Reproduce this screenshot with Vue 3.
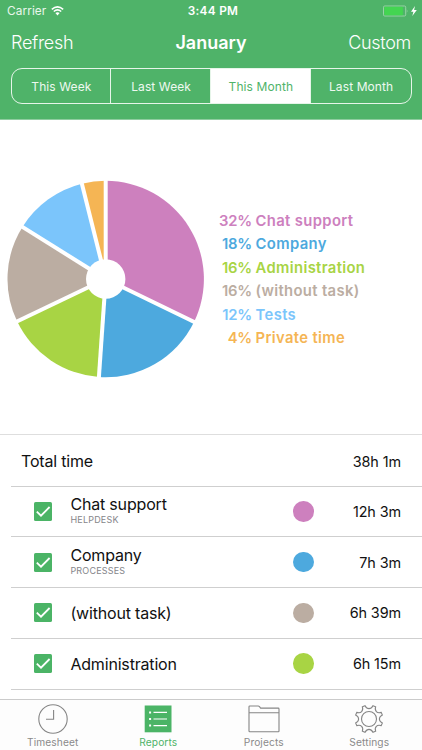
<template>
  <div class="screen">
    <header class="header">
      <div class="status-bar">
        <span class="carrier">
          Carrier
          <svg class="wifi" viewBox="0 0 13 10" width="13" height="10">
            <path d="M0.8 3.4 Q6.5 -1.6 12.2 3.4" />
            <path d="M2.8 5.5 Q6.5 2.3 10.2 5.5" />
            <path class="wifi-dot" d="M6.5 9.4 L4.4 7.1 Q6.5 5.4 8.6 7.1 Z" />
          </svg>
        </span>
        <span class="clock">3:44 PM</span>
        <span class="battery-wrap">
          <svg viewBox="0 0 36 12" width="36" height="12">
            <rect class="battery-case" x="0.5" y="1" width="22.2" height="10" rx="1.2" />
            <rect class="battery-level" x="1.3" y="1.8" width="18.6" height="8.4" rx="0.6" />
            <path class="battery-tip" d="M23.8 4.2 Q25.2 6 23.8 7.8 Z" />
            <path class="bolt" d="M32 1 L28 6.7 H30.4 L29.3 11 L33.8 5.1 H31.1 Z" />
          </svg>
        </span>
      </div>

      <div class="nav-bar">
        <span class="nav-action">Refresh</span>
        <h1>January</h1>
        <span class="nav-action right">Custom</span>
      </div>

      <div class="segments">
        <button
          v-for="range in ranges"
          :key="range"
          class="segment"
          :class="{ active: range === selectedRange }"
          @click="selectedRange = range"
        >
          {{ range }}
        </button>
      </div>
    </header>

    <section class="chart">
      <svg class="pie" viewBox="-98.7 -99 198 198" width="198" height="198">
        <path v-for="slice in slices" :key="slice.name" :d="slice.path" :fill="slice.color" />
        <line
          v-for="slice in slices"
          :key="'line-' + slice.name"
          class="gap"
          x1="0"
          y1="0"
          :x2="slice.x"
          :y2="slice.y"
        />
        <circle class="hole" r="19.7" />
      </svg>
      <ul class="legend">
        <li v-for="slice in slices" :key="slice.name" :style="{ color: slice.color }">
          <span class="percent">{{ slice.percent }}%</span>
          <span class="legend-name">{{ slice.name }}</span>
        </li>
      </ul>
    </section>

    <section class="list">
      <div class="row total">
        <span class="row-title">Total time</span>
        <span class="row-time">38h 1m</span>
      </div>
      <div v-for="task in tasks" :key="task.name" class="row">
        <svg class="checkbox" viewBox="0 0 18 19" width="18" height="19">
          <rect width="18" height="19" rx="1.6" />
          <path d="M2.8 9.6 L7 13.7 L15.6 5" />
        </svg>
        <div class="row-text" :class="{ double: task.project }">
          <span class="row-title">{{ task.name }}</span>
          <span v-if="task.project" class="row-project">{{ task.project }}</span>
        </div>
        <span class="dot" :style="{ background: task.color }"></span>
        <span class="row-time">{{ task.time }}</span>
      </div>
    </section>

    <nav class="tab-bar">
      <a class="tab">
        <svg viewBox="0 0 32 30" width="32" height="30">
          <circle cx="16" cy="15" r="14.2" />
          <path d="M16.6 6 V15.3 H9" />
        </svg>
        <span>Timesheet</span>
      </a>
      <a class="tab active">
        <svg viewBox="0 0 32 30" width="32" height="30">
          <rect class="solid" x="2.7" y="1.5" width="26.8" height="26.8" />
          <path class="light" d="M11.5 8.4 H25 M11.5 15 H25 M11.5 21.6 H25" />
          <path class="light bullets" d="M7.1 8.4 H9.1 M7.1 15 H9.1 M7.1 21.6 H9.1" />
        </svg>
        <span>Reports</span>
      </a>
      <a class="tab">
        <svg viewBox="0 0 32 30" width="32" height="30">
          <path d="M1 27 V2.8 Q1 2 1.8 2 H10.2 Q11 2 11.5 2.7 L12.6 4.1 H30.3 Q31 4.1 31 4.9 V27 Q31 27.7 30.3 27.7 H1.8 Q1 27.7 1 27 Z M1 8.8 H31" />
        </svg>
        <span>Projects</span>
      </a>
      <a class="tab">
        <svg viewBox="-16 -15 32 30" width="32" height="30">
          <path :d="gearPath" />
          <circle r="7.5" />
        </svg>
        <span>Settings</span>
      </a>
    </nav>
  </div>
</template>

<script setup>
import { ref } from 'vue'

const ranges = ['This Week', 'Last Week', 'This Month', 'Last Month']
const selectedRange = ref('This Month')

// share is the exact portion of the circle, percent is the label
const report = [
  { name: 'Chat support', percent: 32, share: 32.2, color: '#cd80be' },
  { name: 'Company', percent: 18, share: 18.9, color: '#4da9de' },
  { name: 'Administration', percent: 16, share: 16.8, color: '#a8d444' },
  { name: '(without task)', percent: 16, share: 16, color: '#bbada2' },
  { name: 'Tests', percent: 12, share: 12.2, color: '#7bc5fb' },
  { name: 'Private time', percent: 4, share: 3.9, color: '#f5b554' }
]

const tasks = [
  { name: 'Chat support', project: 'HELPDESK', time: '12h 3m', color: '#cd80be' },
  { name: 'Company', project: 'PROCESSES', time: '7h 3m', color: '#4da9de' },
  { name: '(without task)', time: '6h 39m', color: '#bbada2' },
  { name: 'Administration', time: '6h 15m', color: '#a8d444' }
]

// Angles are clockwise from 12 o'clock
const point = (r, degrees) => {
  const rad = (degrees * Math.PI) / 180
  return [(r * Math.sin(rad)).toFixed(2), (-r * Math.cos(rad)).toFixed(2)]
}

const RADIUS = 98.2
let angle = 0
const slices = report.map((item) => {
  const [x1, y1] = point(RADIUS, angle)
  angle += item.share * 3.6
  const [x2, y2] = point(RADIUS, angle)
  const [x, y] = point(RADIUS + 2, angle)
  return { ...item, x, y, path: `M0 0 L${x1} ${y1} A${RADIUS} ${RADIUS} 0 0 1 ${x2} ${y2} Z` }
})

// Eight teeth with rounded valleys between them
const gearPath = Array.from({ length: 8 }, (_, i) => {
  const a = 22.5 + i * 45
  const start = point(13.9, a - 6)
  const end = point(13.9, a + 6)
  const c1 = point(9.6, a + 11)
  const c2 = point(9.6, a + 34)
  const next = point(13.9, a + 39)
  return `${i ? 'L' : 'M'}${start} L${end} C${c1} ${c2} ${next}`
}).join(' ') + ' Z'
</script>

<style>
body {
  margin: 0;
  background: #fff;
}
</style>

<style scoped>
.screen {
  width: 422px;
  height: 750px;
  display: flex;
  flex-direction: column;
  overflow: hidden;
  background: #fff;
  color: #111;
  font-family: Inter, 'Liberation Sans', sans-serif;
}

.header {
  box-sizing: border-box;
  height: 120px;
  flex: none;
  background: #4fb369;
  border-bottom: 1px solid #8fcca0;
  color: #fff;
}

.status-bar {
  display: grid;
  grid-template-columns: 1fr auto 1fr;
  align-items: center;
  height: 22px;
  padding: 0 3px 0 7px;
  font-size: 11.8px;
}

.carrier {
  display: flex;
  align-items: center;
  gap: 4.5px;
  letter-spacing: 0.1px;
  color: #e9f7ec;
}

.wifi {
  fill: none;
  stroke: #fff;
  stroke-width: 1.5;
}

.wifi-dot {
  fill: #fff;
  stroke: none;
}

.clock {
  font-weight: 600;
  letter-spacing: 0.3px;
}

.battery-wrap {
  display: flex;
  justify-content: flex-end;
}

.battery-case {
  fill: none;
  stroke: #a0d6ad;
  stroke-width: 0.9;
}

.battery-level {
  fill: #43d551;
}

.battery-tip {
  fill: #a0d6ad;
}

.bolt {
  fill: #fff;
}

.nav-bar {
  display: grid;
  grid-template-columns: 1fr auto 1fr;
  align-items: center;
  height: 40px;
  padding: 0 11px;
}

.nav-action {
  font-size: 18px;
  font-weight: 350;
  letter-spacing: -0.3px;
}

.right {
  text-align: right;
}

.nav-bar h1 {
  margin: 0;
  font-size: 18px;
  font-weight: 600;
}

.segments {
  box-sizing: border-box;
  display: grid;
  grid-template-columns: repeat(4, 1fr);
  height: 36px;
  margin: 6px 10.5px 0;
  border: 1.3px solid #e6f5e9;
  border-radius: 11px;
  overflow: hidden;
}

.segment {
  padding: 0 0 0 1px;
  border: 0;
  border-right: 1.3px solid #e6f5e9;
  background: none;
  color: #eef9f0;
  font-family: inherit;
  font-size: 12px;
  letter-spacing: 0.1px;
}

.segment:last-child {
  border-right: 0;
}

.segment.active {
  background: #fff;
  color: #4fb369;
}

.chart {
  display: flex;
  flex: none;
  height: 314px;
  box-sizing: border-box;
  padding: 60px 0 0 6.6px;
}

.pie {
  flex: none;
}

.gap {
  stroke: #fff;
  stroke-width: 4;
}

.hole {
  fill: #fff;
}

.legend {
  margin: 29.8px 0 0 13.4px;
  padding: 0;
  list-style: none;
  font-size: 14.8px;
  font-weight: 600;
  line-height: 23.45px;
}

.legend li {
  display: flex;
  gap: 3.6px;
}

.percent {
  width: 34px;
  letter-spacing: -0.2px;
  text-align: right;
}

.legend-name {
  letter-spacing: 0.36px;
}

.list {
  flex: none;
  border-top: 1px solid #dedede;
}

.row {
  display: flex;
  align-items: center;
  box-sizing: border-box;
  height: 50.8px;
  margin-left: 11px;
  padding: 0 21px 0 23px;
  border-bottom: 1px solid #cfcfcf;
}

.row.total {
  height: 51.5px;
  padding-top: 2px;
  padding-left: 10px;
  justify-content: space-between;
}

.checkbox {
  flex: none;
  fill: #4bb466;
}

.checkbox path {
  fill: none;
  stroke: #fff;
  stroke-width: 1.8;
}

.row-text {
  display: flex;
  flex: 1;
  flex-direction: column;
  padding: 1px 0 0 18.4px;
}

.row-text.double {
  padding: 0 0 2px 18.4px;
}

.row-title {
  font-size: 16px;
  line-height: 19px;
  letter-spacing: -0.18px;
}

.row-project {
  color: #85858a;
  font-size: 9px;
  line-height: 11px;
  letter-spacing: 0.2px;
}

.dot {
  width: 20.6px;
  height: 20.6px;
  border-radius: 50%;
}

.row-time {
  width: 87px;
  font-size: 14.4px;
  letter-spacing: -0.1px;
  text-align: right;
}

.tab-bar {
  display: grid;
  grid-template-columns: repeat(4, 1fr);
  flex: 1;
  margin-top: 9px;
  border-top: 1px solid #cbcbcb;
  background: #fdfdfd;
}

.tab {
  display: flex;
  flex-direction: column;
  align-items: center;
  padding-top: 4px;
  color: #8a8a8a;
  font-size: 10.2px;
  line-height: 17px;
  letter-spacing: 0.1px;
}

.tab.active {
  color: #4fb369;
}

.tab svg {
  fill: none;
  stroke: #858585;
  stroke-width: 1.1;
}

.tab .solid {
  fill: #4bb466;
  stroke: none;
}

.tab .light {
  stroke: #fff;
}

.tab .bullets {
  stroke-width: 2;
}
</style>
